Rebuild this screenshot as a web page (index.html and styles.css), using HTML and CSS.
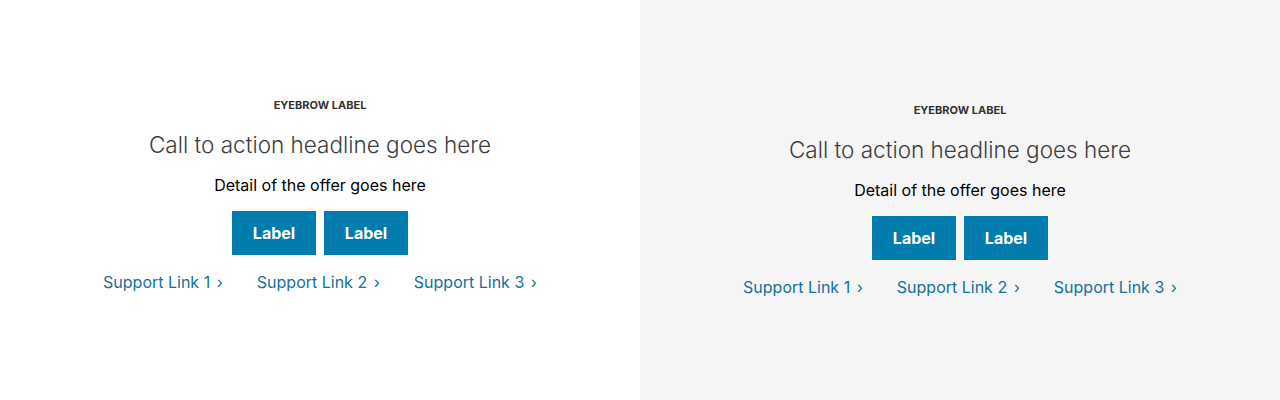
FILE: index.html
```html
<!DOCTYPE html>
<html lang="en">
<head>
    <meta charset="UTF-8">
    <meta name="viewport" content="width=device-width, initial-scale=1.0">
    <title>Call to action</title>
    <link rel="stylesheet" href="styles.css">
</head>
<body>
    <div class="panels">
        <section class="cta cta-light">
            <div class="eyebrow">EYEBROW LABEL</div>
            <h2 class="headline">Call to action headline goes here</h2>
            <p class="detail">Detail of the offer goes here</p>
            <div class="buttons">
                <a class="btn" href="#">Label</a>
                <a class="btn" href="#">Label</a>
            </div>
            <div class="links">
                <a href="#">Support Link 1 <span class="chev">›</span></a>
                <a href="#">Support Link 2 <span class="chev">›</span></a>
                <a href="#">Support Link 3 <span class="chev">›</span></a>
            </div>
        </section>

        <section class="cta cta-grey">
            <div class="eyebrow">EYEBROW LABEL</div>
            <h2 class="headline">Call to action headline goes here</h2>
            <p class="detail">Detail of the offer goes here</p>
            <div class="buttons">
                <a class="btn" href="#">Label</a>
                <a class="btn" href="#">Label</a>
            </div>
            <div class="links">
                <a href="#">Support Link 1 <span class="chev">›</span></a>
                <a href="#">Support Link 2 <span class="chev">›</span></a>
                <a href="#">Support Link 3 <span class="chev">›</span></a>
            </div>
        </section>
    </div>
</body>
</html>
```

FILE: styles.css
```css
body {
    margin: 0;
    font-family: Inter, "Noto Sans", sans-serif;
    color: #000;
}
.panels {
    display: grid;
    grid-template-columns: 640px 640px;
    height: 400px;
}
.cta {
    display: flex;
    flex-direction: column;
    align-items: center;
    text-align: center;
}
.cta-light {
    background: #fff;
    padding-top: 97px;
}
.cta-grey {
    background: #f5f5f5;
    padding-top: 102px;
}
.eyebrow {
    font-size: 11px;
    font-weight: 700;
    color: #333;
    line-height: 16px;
}
.headline {
    margin: 16px 0 0;
    font-size: 22.5px;
    font-weight: 300;
    color: #3d3d3d;
    line-height: 32px;
}
.detail {
    margin: 13px 0 0;
    font-size: 16px;
    line-height: 22px;
}
.buttons {
    display: flex;
    gap: 8px;
    margin-top: 15px;
}
.btn {
    display: flex;
    align-items: center;
    justify-content: center;
    width: 84px;
    height: 44px;
    background: #007dac;
    color: #fff;
    font-size: 16px;
    font-weight: 700;
    text-decoration: none;
}
.links {
    display: flex;
    gap: 34px;
    margin-top: 16px;
}
.links a {
    color: #16709b;
    font-size: 16px;
    line-height: 22px;
    text-decoration: none;
}
.chev {
    margin-left: 2px;
}
```
